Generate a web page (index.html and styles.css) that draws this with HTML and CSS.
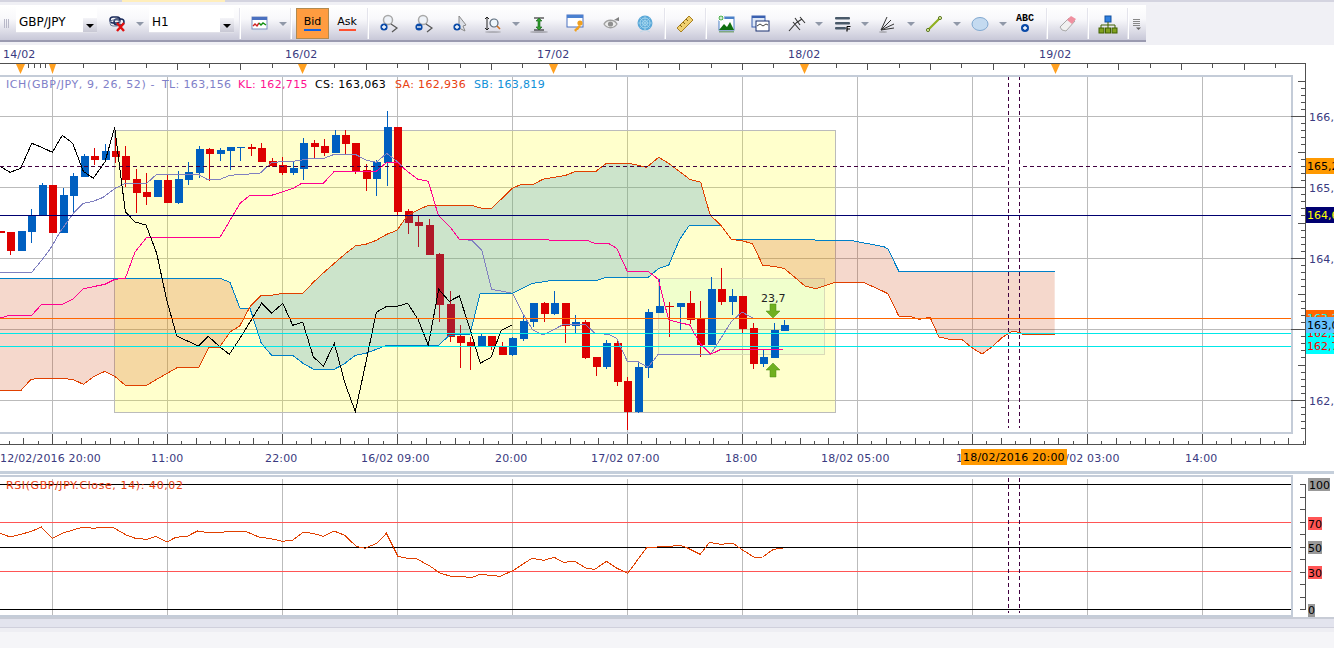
FILE: index.html
```html
<!DOCTYPE html>
<html lang="en">
<head>
    <meta charset="UTF-8">
    <title>GBP/JPY H1</title>
    <link rel="stylesheet" href="styles.css">
</head>
<body>
    <div class="tabstrip"><div class="tab-active"></div></div>
    <div class="toolbar-row">
        <div class="toolbar">
            <div class="grip"></div>
            <div class="combo combo-symbol">GBP/JPY<span class="combo-btn"></span></div>
            <svg class="icon" viewBox="0 0 20 20"><rect x="2" y="3" width="10" height="6" rx="3" fill="none" stroke="#1a2a5a" stroke-width="1.5"/><rect x="6" y="5" width="10" height="6" rx="3" fill="none" stroke="#1a2a5a" stroke-width="1.5"/><rect x="2" y="6" width="10" height="6" rx="3" fill="none" stroke="#6a7a9a"/><path d="M9 9l7 8M16 9l-7 8" stroke="#e01010" stroke-width="2.4"/></svg>
            <span class="drop"></span>
            <div class="combo combo-period">H1<span class="combo-btn"></span></div>
            <div class="sep"></div>
            <svg class="icon" viewBox="0 0 20 20"><rect x="2" y="3" width="15" height="12" fill="#fff" stroke="#7a90c0"/><rect x="2" y="3" width="15" height="3" fill="#4a70c0"/><path d="M3 12l2-2 2 2 2-3" fill="none" stroke="#d02020" stroke-width="1.4"/><path d="M9 9l2 2 2-2 3 2" fill="none" stroke="#109010" stroke-width="1.4"/><rect x="3" y="16" width="13" height="2" fill="#d8dce8"/></svg>
            <span class="drop"></span>
            <div class="sep"></div>
            <div class="price-btn price-bid"><span class="price-text">Bid</span><span class="price-bar bar-bid"></span></div>
            <div class="price-btn"><span class="price-text">Ask</span><span class="price-bar bar-ask"></span></div>
            <div class="sep"></div>
            <svg class="icon" viewBox="0 0 20 20"><circle cx="9" cy="6" r="4.5" fill="#eef2f8" stroke="#a8a8a8" stroke-width="1.5"/><path d="M12 10l6 4-5 4" fill="none" stroke="#555" stroke-width="1.2"/><circle cx="5" cy="13" r="3.6" fill="#0a4aa8"/><path d="M3 13h4M5 11v4" stroke="#fff" stroke-width="1.3"/></svg>
            <svg class="icon" viewBox="0 0 20 20"><circle cx="9" cy="6" r="4.5" fill="#eef2f8" stroke="#a8a8a8" stroke-width="1.5"/><path d="M12 10l6 4-5 4" fill="none" stroke="#555" stroke-width="1.2"/><circle cx="5" cy="13" r="3.6" fill="#0a4aa8"/><path d="M3 13h4" stroke="#fff" stroke-width="1.3"/></svg>
            <svg class="icon" viewBox="0 0 20 20"><path d="M9 2l7 9-3 1 2 5-6-3z" fill="#dcdfe6" stroke="#8a8a8a"/><circle cx="7" cy="13" r="3.6" fill="#0a4aa8"/><path d="M5 13h4M7 11v4" stroke="#fff" stroke-width="1.3"/></svg>
            <svg class="icon" viewBox="0 0 20 20"><path d="M4 3v13M2 5l2-2 2 2M2 14l2 2 2-2" fill="none" stroke="#222"/><circle cx="11" cy="9" r="4" fill="#eef6fb" stroke="#5a6a7a" stroke-width="1.2"/><path d="M14 12l3 3" stroke="#d07020" stroke-width="1.6"/><ellipse cx="10" cy="18" rx="8" ry="1" fill="#b0b0b8"/></svg>
            <span class="drop"></span>
            <svg class="icon" viewBox="0 0 20 20"><path d="M5 4h10M5 16h10" stroke="#111" stroke-width="1.2"/><path d="M10 4l3 3h-2v6h2l-3 3-3-3h2V7H7z" fill="#30a030" stroke="#106010" stroke-width=".6"/><ellipse cx="10" cy="18" rx="9" ry="1" fill="#a8a8b0"/></svg>
            <svg class="icon" viewBox="0 0 20 20"><rect x="1" y="1" width="16" height="12" fill="#fff" stroke="#4a70c0"/><rect x="1" y="1" width="16" height="3" fill="#4a80d0"/><circle cx="14" cy="9" r="2.6" fill="#f0a020"/><path d="M13 11l-5 5 2 2 1-2 1 0 3-4" fill="#f0a020"/></svg>
            <svg class="icon" viewBox="0 0 20 20"><path d="M2 10c3-5 10-5 13 0-3 5-10 5-13 0z" fill="#eee" stroke="#a0a0a0" stroke-width="1.3"/><circle cx="8.5" cy="10" r="2.6" fill="#909090"/><path d="M12 6l5-3v4z" fill="#808080"/></svg>
            <svg class="icon" viewBox="0 0 20 20"><circle cx="10" cy="9" r="7.5" fill="#5aa8d8"/><circle cx="10" cy="9" r="5" fill="none" stroke="#a8d8f0"/><circle cx="10" cy="9" r="2.5" fill="none" stroke="#a8d8f0"/><path d="M3 9h14M10 2v14M5 4l10 10M15 4L5 14" stroke="#a8d8f0" stroke-width=".6"/><path d="M5 18l5-2 5 2" fill="none" stroke="#c0d8e8"/></svg>
            <div class="sep"></div>
            <svg class="icon" viewBox="0 0 20 20"><path d="M2 14L14 2l4 4L6 18z" fill="#f0d070" stroke="#a88020"/><path d="M5 11l2 2M8 8l2 2M11 5l2 2" stroke="#806010"/></svg>
            <div class="sep"></div>
            <svg class="icon" viewBox="0 0 20 20"><rect x="3" y="3" width="15" height="13" fill="#fff" stroke="#4a80c8"/><rect x="3" y="3" width="15" height="2" fill="#4a80c8"/><path d="M3 16l5-6 3 3 3-5 4 8z" fill="#107010"/><circle cx="5" cy="4" r="3" fill="#50b050" stroke="#fff"/><path d="M3.5 4h3M5 2.500v3" stroke="#fff"/><rect x="3" y="17" width="15" height="1.5" fill="#80a880"/></svg>
            <svg class="icon" viewBox="0 0 20 20"><rect x="1" y="2" width="13" height="11" fill="#dfe8f6" stroke="#3a60b0"/><rect x="1" y="2" width="13" height="2" fill="#3a60b0"/><rect x="5" y="7" width="13" height="10" fill="#fff" stroke="#1a3070"/><path d="M6 12l3-2 3 2 3-2 2 1" fill="none" stroke="#444"/></svg>
            <svg class="icon" viewBox="0 0 20 20"><path d="M2 17l7-8M6 8l7 8M8 4l5 7M13 3l5 6M9 9l6-4" fill="none" stroke="#333" stroke-width="1.1"/></svg>
            <span class="drop"></span>
            <svg class="icon" viewBox="0 0 20 20"><rect x="2" y="3" width="15" height="2.500" rx="1" fill="#4a5a6a"/><rect x="2" y="8" width="15" height="2.500" rx="1" fill="#4a5a6a"/><rect x="2" y="13" width="11" height="2.500" rx="1" fill="#4a5a6a"/><path d="M14 12.500h3.500M14 12.500v5M14 15h3" stroke="#000" stroke-width="1.2" fill="none"/></svg>
            <span class="drop"></span>
            <svg class="icon" viewBox="0 0 20 20"><path d="M3 16L9 3M3 16L13 6M3 16L16 10M3 16l13-2" fill="none" stroke="#333"/><ellipse cx="5" cy="18" rx="4" ry="1" fill="#b0b0b8"/></svg>
            <span class="drop"></span>
            <svg class="icon" viewBox="0 0 20 20"><path d="M4 16L16 4" stroke="#90b020" stroke-width="2.2"/><circle cx="4" cy="16" r="1.6" fill="#d8e8a0" stroke="#406000" stroke-width=".8"/><circle cx="16" cy="4" r="1.6" fill="#d8e8a0" stroke="#406000" stroke-width=".8"/></svg>
            <span class="drop"></span>
            <svg class="icon" viewBox="0 0 20 20"><ellipse cx="10" cy="10" rx="8" ry="6.500" fill="#c4daf0" stroke="#80a8d0"/></svg>
            <span class="drop"></span>
            <div class="abc"><span class="abc-text">ABC</span><svg class="abc-plus" viewBox="0 0 10 10"><circle cx="5" cy="5" r="4" fill="#0a4aa8"/><path d="M3 5h4M5 3v4" stroke="#fff" stroke-width="1.300"/></svg></div>
            <div class="sep"></div>
            <svg class="icon" viewBox="0 0 20 20"><path d="M2 13l9-9 6 3-9 10-4-1z" fill="#f0f0f0" stroke="#a8a8a8"/><path d="M9 6l4-4 5 3-4 5z" fill="#f090a0"/></svg>
            <div class="sep"></div>
            <svg class="icon" viewBox="0 0 20 20"><rect x="7" y="2" width="6" height="6" fill="#3080e0" stroke="#1050a0"/><path d="M10 8v3M3 14v-3h14v3M10 11v3" fill="none" stroke="#406000"/><rect x="1" y="14" width="5" height="5" fill="#80a020" stroke="#406000"/><rect x="7.500" y="14" width="5" height="5" fill="#80a020" stroke="#406000"/><rect x="14" y="14" width="5" height="5" fill="#80a020" stroke="#406000"/></svg>
            <div class="sep"></div>
            <svg class="icon icon-more" viewBox="0 0 10 12"><path d="M1 1.500h7M1 3.500h7M1 5.500h7M1 7.500h7" stroke="#888"/><path d="M4 9.500h5l-2.500 2.500z" fill="#666"/></svg>
        </div>
    </div>

    <svg class="chart chart-main" viewBox="0 45 1334 426">
        <g id="mainGrid"></g>
        <rect class="zone" x="114.500" y="130.500" width="720.500" height="281.500"/>
        <rect class="zone-inner" x="658.500" y="278.500" width="166" height="76"/>
        <g id="candles"></g>
        <g id="clouds"></g>
        <g id="ichimoku"></g>
        <path class="hline dash" d="M0 166.500H1005M1023 166.500H1291"/>
        <path class="hline dash" d="M1008.500 76V428M1019.500 76V428"/>
        <path class="hline navy" d="M0 215.500H1291"/>
        <path class="hline orange" d="M0 318.500H1291"/>
        <path class="hline cyan" d="M0 333.500H1291M0 346.500H1291"/>
        <g id="mainAxes"></g>

        <text class="axis-label" x="3" y="58">14/02</text>
        <text class="axis-label" x="285" y="58">16/02</text>
        <text class="axis-label" x="537" y="58">17/02</text>
        <text class="axis-label" x="788" y="58">18/02</text>
        <text class="axis-label" x="1039" y="58">19/02</text>

        <text class="legend legend-wide c-ich" x="6" y="88">ICH(GBP/JPY, 9, 26, 52) -</text>
        <text class="legend c-ich" x="162" y="88">TL: 163,156</text>
        <text class="legend c-kl" x="238" y="88">KL: 162,715</text>
        <text class="legend c-cs" x="315" y="88">CS: 163,063</text>
        <text class="legend c-sa" x="395" y="88">SA: 162,936</text>
        <text class="legend c-sb" x="474" y="88">SB: 163,819</text>

        <text class="value" x="761" y="302">23,7</text>
        <path class="arrow-green" d="M770 304h6v7h4l-7 7-7-7h4z"/>
        <path class="arrow-green" d="M773 363l7 7h-4v7h-6v-7h-4z"/>

        <text class="axis-label" x="1309" y="121">166,0</text>
        <text class="axis-label" x="1309" y="192">165,0</text>
        <text class="axis-label" x="1309" y="263">164,0</text>
        <text class="axis-label" x="1309" y="405">162,0</text>

        <rect class="tag-orange" x="1306" y="158" width="28" height="16"/>
        <text class="tag-text t-black" x="1307" y="170">165,2</text>
        <rect class="tag-navy" x="1306" y="207" width="28" height="16"/>
        <text class="tag-text t-yellow" x="1307" y="219">164,6</text>
        <rect class="tag-deep" x="1306" y="310" width="28" height="9"/>
        <text class="tag-text t-cyan" x="1307" y="322">163,2</text>
        <rect class="tag-cyan" x="1306" y="333" width="28" height="21"/>
        <text class="tag-text t-red" x="1307" y="337">162,9</text>
        <rect class="tag-sky" x="1306" y="317" width="28" height="16"/>
        <text class="tag-text t-black" x="1307" y="329">163,0</text>
        <text class="tag-text t-red" x="1307" y="350">162,7</text>

        <text class="axis-label" x="0" y="462">12/02/2016 20:00</text>
        <text class="axis-label" x="151" y="462">11:00</text>
        <text class="axis-label" x="265" y="462">22:00</text>
        <text class="axis-label" x="361" y="462">16/02 09:00</text>
        <text class="axis-label" x="495" y="462">20:00</text>
        <text class="axis-label" x="591" y="462">17/02 07:00</text>
        <text class="axis-label" x="725" y="462">18:00</text>
        <text class="axis-label" x="821" y="462">18/02 05:00</text>
        <text class="axis-label" x="956" y="462">16:00</text>
        <text class="axis-label" x="1051" y="462">19/02 03:00</text>
        <text class="axis-label" x="1185" y="462">14:00</text>
        <rect class="tag-orange" x="961" y="449" width="106" height="16"/>
        <text class="tag-text tag-wide t-black" x="963" y="461">18/02/2016 20:00</text>
    </svg>

    <div class="splitter"></div>

    <svg class="chart chart-rsi" viewBox="0 475 1334 142">
        <g id="rsiGrid"></g>
        <path class="hline rsi-level" d="M0 522.500H1291M0 571.500H1291"/>
        <path class="hline rsi-mid" d="M0 484.500H1291M0 547.500H1291M0 609.500H1291"/>
        <path class="hline dash" d="M1008.500 478V613M1019.500 478V613"/>
        <polyline id="rsiLine" class="line c-rsi"/>
        <g id="rsiAxes"></g>
        <text class="legend legend-wide c-rsi-text" x="6" y="489">RSI(GBP/JPY.Close, 14): 40,02</text>
        <rect class="tag-gray" x="1308" y="478" width="22" height="13"/>
        <text class="tag-text t-black" x="1309" y="489">100</text>
        <rect class="tag-red" x="1308" y="517" width="14" height="13"/>
        <text class="tag-text t-black" x="1308" y="528">70</text>
        <rect class="tag-gray" x="1308" y="541" width="14" height="13"/>
        <text class="tag-text t-black" x="1308" y="552">50</text>
        <rect class="tag-red" x="1308" y="566" width="14" height="13"/>
        <text class="tag-text t-black" x="1308" y="577">30</text>
        <rect class="tag-gray" x="1308" y="604" width="7" height="13"/>
        <text class="tag-text t-black" x="1308" y="614">0</text>
    </svg>

    <div class="footer">
        <div class="footer-bar"></div>
        <div class="footer-strip"></div>
    </div>

    <script src="chart.js"></script>
</body>
</html>
```

FILE: styles.css
```css
body {
    margin: 0;
    height: 648px;
    overflow: hidden;
    background-color: #f5f5f8;
    font-family: "DejaVu Sans", sans-serif;
    font-size: 11px;
}

.tabstrip {
    height: 5px;
    background-color: #f0f0f5;
    box-sizing: border-box;
    border-top: 2px solid #d4d4e0;
}

.tab-active {
    width: 103px;
    height: 2px;
    margin: -2px 0 0 122px;
    background-color: #ffeebb;
}

.toolbar-row {
    height: 40px;
    background-color: #f0f0f5;
}

.toolbar {
    display: grid;
    grid-template-columns: 12px 89px 34px 10px 93px 4px 36px 10px 6px 37px 32px 10px 32px 37px 36px 30px 16px 30px 44px 28px 38px 2px 38px 4px 36px 34px 38px 6px 42px 2px 44px 2px 44px 2px 44px 2px 42px 2px 39px 2px 38px 2px 16px;
    justify-items: center;
    align-items: center;
    width: 1146px;
    height: 37px;
    padding-top: 2px;
    box-sizing: border-box;
    background: linear-gradient(#ffffff, #f8f8fb 40%, #c8c8d8);
    border-bottom: 2px solid #9a9ab0;
}

.grip {
    width: 5px;
    height: 9px;
    background: repeating-linear-gradient(90deg, #b8b8c8 0, #b8b8c8 1px, transparent 1px, transparent 2px);
}

.icon {
    width: 20px;
    height: 20px;
}

.icon-more {
    width: 10px;
    height: 12px;
}

.drop {
    width: 0;
    height: 0;
    border-left: 4px solid transparent;
    border-right: 4px solid transparent;
    border-top: 4px solid #9098a8;
}

.sep {
    width: 1px;
    height: 31px;
    background-color: #e4e4ec;
    border-right: 1px solid #ffffff;
}

.combo {
    position: relative;
    align-self: start;
    height: 26px;
    line-height: 30px;
    padding-left: 3px;
    box-sizing: border-box;
    background-color: #fff;
    border-bottom: 1px solid #e0e0e8;
    font-size: 12px;
    color: #000;
}

.combo-symbol {
    width: 81px;
}

.combo-period {
    width: 85px;
}

.combo-btn {
    position: absolute;
    top: 11px;
    right: 0;
    width: 14px;
    height: 14px;
    background: linear-gradient(#f4f4f8, #c8c8d4);
}

.combo-btn::after {
    content: "";
    position: absolute;
    left: 3px;
    top: 6px;
    border-left: 4px solid transparent;
    border-right: 4px solid transparent;
    border-top: 4px solid #000;
}

.price-btn {
    display: flex;
    flex-direction: column;
    align-items: center;
    justify-content: center;
    width: 33px;
    height: 31px;
    box-sizing: border-box;
    gap: 1px;
}

.price-bid {
    background-color: #ff9c40;
    border: 1px solid #b08a50;
}

.price-text {
    font-size: 11px;
    line-height: 12px;
    color: #000;
}

.price-bar {
    width: 17px;
    height: 2px;
}

.bar-bid {
    background-color: #1060e0;
}

.bar-ask {
    background-color: #ff5030;
}

.abc {
    display: flex;
    flex-direction: column;
    align-items: center;
}

.abc-text {
    font-family: "Liberation Mono", monospace;
    font-size: 10px;
    font-weight: bold;
    line-height: 9px;
    color: #000;
}

.abc-plus {
    width: 10px;
    height: 10px;
}

.chart {
    display: block;
    width: 1334px;
    background-color: #fff;
}

.chart-main {
    height: 426px;
}

.chart-rsi {
    height: 142px;
}

.splitter {
    height: 4px;
    background: linear-gradient(#c5cfdb 75%, #fff 75%);
}

.footer {
    height: 31px;
    border-top: 2px solid #c8ccd6;
    box-sizing: border-box;
}

.footer-bar {
    height: 8px;
    background-color: #e3e4ee;
    border-bottom: 1px solid #d0d0dc;
}

.footer-strip {
    height: 4px;
    background-color: #eeeef3;
}

.grid-line {
    stroke: #bbbbbb;
    stroke-width: 1;
    shape-rendering: crispEdges;
}

.frame {
    stroke: #c4ccd8;
    stroke-width: 2;
    fill: none;
    shape-rendering: crispEdges;
}

.axis-line {
    stroke: #505050;
    stroke-width: 1;
    shape-rendering: crispEdges;
}

.zone {
    fill: rgba(255, 255, 0, 0.2);
    stroke: #bbbbbb;
    shape-rendering: crispEdges;
}

.zone-inner {
    fill: rgba(128, 255, 204, 0.12);
    stroke: #dadab8;
    shape-rendering: crispEdges;
}

.wick,
.body {
    shape-rendering: crispEdges;
}

.up {
    fill: #005fc0;
    stroke: #005fc0;
}

.down {
    fill: #dd0000;
    stroke: #dd0000;
}

.body {
    stroke: none;
}

.cloud-red {
    fill: rgba(205, 60, 0, 0.2);
}

.cloud-green {
    fill: rgba(0, 120, 200, 0.2);
}

.line {
    fill: none;
    stroke-width: 1;
    shape-rendering: crispEdges;
}

.c-sa-line { stroke: #e04000; }
.c-sb-line { stroke: #0080c8; }
.c-tl-line { stroke: #8080c0; }
.c-kl-line { stroke: #ff0090; }
.c-cs-line { stroke: #000000; }
.c-rsi { stroke: #e04000; }

.hline {
    fill: none;
    stroke-width: 1;
    shape-rendering: crispEdges;
}

.dash {
    stroke: #400040;
    stroke-dasharray: 4 3;
}

.navy { stroke: #000070; }
.orange { stroke: #ff6600; }
.cyan { stroke: #00e8e8; }
.rsi-level { stroke: #ff5555; }
.rsi-mid { stroke: #000000; }

.marker {
    fill: #ffa020;
}

.axis-label,
.legend,
.value,
.tag-text {
    font-family: "DejaVu Sans", sans-serif;
    font-size: 11px;
}

.axis-label { fill: #3a3a80; letter-spacing: 0.15px; }
.legend { letter-spacing: 0.35px; }
.legend-wide { letter-spacing: 0.6px; }
.tag-wide { letter-spacing: 0.2px; }
.c-ich { fill: #8080c8; }
.c-kl { fill: #ff1090; }
.c-cs { fill: #000000; }
.c-sa { fill: #e84010; }
.c-sb { fill: #1090d8; }
.c-rsi-text { fill: #e84010; }
.value { fill: #222222; }

.arrow-green {
    fill: #70b020;
    stroke: #4a8a10;
    stroke-width: 0.5;
}

.tag-orange { fill: #ff9900; }
.tag-navy { fill: #000070; }
.tag-deep { fill: #ff6600; }
.tag-sky { fill: #66c0ff; }
.tag-cyan { fill: #00ffff; }
.tag-gray { fill: #999999; }
.tag-red { fill: #ff5555; }

.t-black { fill: #000000; }
.t-yellow { fill: #ffff00; }
.t-cyan { fill: #00ffff; }
.t-red { fill: #ff0000; }
```

FILE: chart.js
```js
// all chart data below was read off at 3x, so pts() brings it back to page pixels
var NS = "http://www.w3.org/2000/svg";

function add(parent, name, attrs) {
    var node = document.createElementNS(NS, name);
    for (var key in attrs) {
        node.setAttribute(key, attrs[key]);
    }
    parent.appendChild(node);
    return node;
}

function pts(x0, flat, scale) {
    var out = [];
    for (var i = 0; i < flat.length; i += 2) {
        out.push([x0 + flat[i] / (scale || 3), 100 + flat[i + 1] / 3]);
    }
    return out;
}

function str(list) {
    return list.map(function (p) { return p[0].toFixed(1) + "," + p[1].toFixed(1); }).join(" ");
}

function vline(parent, x, y1, y2, cls) {
    add(parent, "line", { x1: x, x2: x, y1: y1, y2: y2, class: cls });
}

function hline(parent, y, x1, x2, cls) {
    add(parent, "line", { x1: x1, x2: x2, y1: y, y2: y, class: cls });
}

var gridX = [52, 167, 282, 397, 512, 627, 742, 857, 972, 1087, 1202];

// main grid
var mainGrid = document.getElementById("mainGrid");
gridX.forEach(function (x) {
    vline(mainGrid, x + 0.5, 77, 432, "grid-line");
});
[116, 187, 258, 329, 400].forEach(function (y) {
    hline(mainGrid, y + 0.5, 0, 1291, "grid-line");
});

// candles: color, wick top, body top, body bottom, wick bottom
var candleData = [
    ["d",393,393,399,399], ["d",396,396,452,465], ["u",393,393,453,453], ["u",327,346,396,429],
    ["u",250,255,346,346], ["d",255,255,399,399], ["u",264,285,399,399], ["u",220,228,288,336],
    ["u",162,168,231,231], ["d",144,168,180,195], ["u",132,153,180,180], ["d",90,153,171,190],
    ["d",138,168,240,260], ["d",207,237,279,339], ["d",219,276,291,315], ["u",240,240,291,291],
    ["d",225,240,309,309], ["u",213,237,309,312], ["u",186,216,240,255], ["u",138,147,219,234],
    ["d",144,147,162,243], ["u",144,150,162,183], ["u",141,141,153,210], ["u",140,141,144,183],
    ["d",132,141,147,168], ["d",129,144,186,186], ["d",174,183,198,201], ["d",171,195,219,225],
    ["u",186,204,219,225], ["u",114,129,207,240], ["d",120,129,141,174], ["d",117,138,159,168],
    ["u",90,105,159,159], ["d",90,105,132,162], ["d",129,129,216,222], ["d",192,210,237,273],
    ["u",180,186,237,288], ["u",33,81,189,258], ["d",81,81,336,346], ["d",327,333,369,402],
    ["d",348,366,378,441], ["d",357,375,465,465], ["d",460,462,615,666], ["d",573,612,711,726],
    ["d",675,708,729,804], ["d",711,726,738,810], ["u",702,708,738,740], ["d",708,708,738,750],
    ["d",726,741,765,765], ["u",711,714,765,768], ["u",642,663,717,723], ["u",609,609,666,681],
    ["d",606,609,642,666], ["u",573,609,642,645], ["d",609,609,678,729], ["u",645,666,678,699],
    ["d",660,666,774,777], ["d",771,771,801,828], ["u",720,729,801,807], ["d",720,729,846,858],
    ["d",831,843,936,990], ["u",786,801,936,939], ["u",627,636,804,834], ["u",537,618,639,639],
    ["d",606,618,621,711], ["u",609,609,621,690], ["d",573,609,660,672], ["d",603,657,735,771],
    ["u",531,567,735,735], ["d",504,567,606,615], ["u",567,588,606,645], ["d",588,588,687,699],
    ["d",669,684,792,807], ["u",750,771,792,801], ["u",669,690,774,774], ["u",660,675,693,693]
];

var candles = document.getElementById("candles");
candleData.forEach(function (c, i) {
    var cx = Math.round(52.3 + (i - 5) * 10.4545);
    var cls = c[0] == "u" ? "up" : "down";
    var y = function (v) { return 100 + v / 3; };
    vline(candles, cx + 0.5, y(c[1]), y(c[4]), "wick " + cls);
    add(candles, "rect", { x: cx - 3, y: y(c[2]), width: 7.5, height: Math.max(y(c[3]) - y(c[2]), 1), class: "body " + cls });
});

// ichimoku, split where the two spans cross
var sa1 = pts(0, [0,872,62,872,93,838,124,835,172,835,218,838,250,853,282,829,315,814,344,829,376,856,440,856,470,838,533,802,596,802,627,741,659,741,690,696,719,678,750,620]);
var sb1 = pts(0, [0,535,660,535,690,547,720,625,750,625]);

var sa2 = pts(0, [750,620,784,586,815,586,847,580,909,580,940,547,972,517,1003,490,1035,462,1066,438,1097,433,1129,421,1160,403,1191,391,1223,345,1254,330,1285,316]).concat(
    pts(400, [215,316,245,325,275,325,338,264,365,253,401,253,428,238,497,226,527,214,588,214,619,190,688,190,740,202,776,172,806,190,838,214,869,238,902,247,931,346,963,376]));
var sb2 = pts(0, [750,625,784,730,815,766,878,766,909,790,941,808,1003,808,1035,790,1066,766,1097,760,1129,748,1160,736,1316,736,1348,706]).concat(
    pts(400, [210,703,240,582,275,580,338,580,398,550,460,541,590,541,619,532,745,532,776,505,806,496,838,420,868,376,963,376]));

var sa3 = pts(400, [963,376,994,418,1030,423,1058,432,1088,496,1120,499,1152,505,1215,558,1247,566,1305,547,1390,547]).concat(
    pts(884, [0,575,12,581,44,648,80,650,105,658,138,652,165,711,197,718,233,718,262,742,294,762,325,740,355,712,385,694,406,697,417,703,512,703]));
var sb3 = pts(400, [963,376,994,418,1350,421]).concat(
    pts(884, [0,440,12,447,44,513,512,513]));

var clouds = document.getElementById("clouds");
[[sa1, sb1, "cloud-red"], [sa2, sb2, "cloud-green"], [sa3, sb3, "cloud-red"]].forEach(function (part) {
    add(clouds, "polygon", { points: str(part[0].concat(part[1].slice().reverse())), class: part[2] });
});

var tenkan = pts(0, [0,517,95,517,125,481,155,440,180,396,220,340,250,310,280,304,310,292,345,265,376,250,440,250,470,223,595,223,625,240,660,238,690,226,780,220,815,187,878,184,940,175,972,175,1003,163,1066,163,1097,180,1129,187,1160,160,1191,184,1223,215,1254,238,1285,244,1315,346]).concat(
    pts(400, [150,380,178,418,215,421,245,450,275,568,338,580,368,640,398,690,430,705,493,672,555,672,585,700,625,703,650,715,682,784,712,784,744,802,775,763,932,763,994,665,1026,636,1058,654]));
var kijun = pts(0, [0,654,30,646,95,646,125,613,187,613,218,598,250,566,315,553,345,538,376,535,405,456,440,412,660,412,720,310,750,286,815,286,880,265,905,250,970,250,1003,214,1129,214,1160,187,1191,187,1223,215,1254,238,1285,244,1315,346,1350,380]).concat(
    pts(400, [178,418,560,421,585,430,625,430,650,445,682,514,744,514,775,538,806,660,869,675,900,730,932,763,963,748,1148,748]));
var chikou = pts(0, [0,199,30,217,62,205,95,130,125,142,157,157,187,106,218,130,250,214,280,235,315,185,344,82,376,335,405,366,438,375,470,460,500,600,530,708,595,738,625,709,660,741,688,763,720,715,785,609,815,640,848,610,878,676,908,666,940,770,970,799,1003,730,1035,850,1066,935,1097,790,1129,637,1160,619,1191,619,1223,610,1254,658,1285,736,1316,568,1348,604]).concat(
    pts(400, [178,588,210,687,241,790,273,772,304,691,335,676]));

var ichimoku = document.getElementById("ichimoku");
[[tenkan, "c-tl-line"], [sb1, "c-sb-line"], [sb2, "c-sb-line"], [sb3, "c-sb-line"],
 [sa1, "c-sa-line"], [sa2, "c-sa-line"], [sa3, "c-sa-line"], [kijun, "c-kl-line"], [chikou, "c-cs-line"]].forEach(function (l) {
    add(ichimoku, "polyline", { points: str(l[0]), class: "line " + l[1] });
});

// axes of the main pane
var axes = document.getElementById("mainAxes");
add(axes, "path", { d: "M0 76H1292V433H0", class: "frame" });
hline(axes, 63.5, 0, 1306, "axis-line");
hline(axes, 444.5, 0, 1306, "axis-line");
vline(axes, 1305.5, 63, 445, "axis-line");

for (var k = -1; k < 40; k++) {
    var tx = Math.round(52 + k * 31.36) + 0.5;
    if (tx < 1305) {
        vline(axes, tx, 64, k % 2 ? 68 : 70, "axis-line");
    }
}
[28, 34, 40, 45].forEach(function (x) {
    vline(axes, x + 0.5, 64, 68, "axis-line");
});
[20.5, 52.5, 302.5, 553.5, 804.5, 1055.5].forEach(function (x) {
    var w = x == 52.5 ? 3.5 : 4.5;
    add(axes, "path", { d: "M" + (x - w) + " 64h" + (w * 2) + "l-" + w + " 10z", class: "marker" });
});

for (var t = -3; t < 88; t++) {
    var bx = Math.round(52 + t * 14.375) + 0.5;
    if (bx > 0 && bx < 1305) {
        var len = t % 8 == 0 ? 10 : (t % 2 == 0 ? 6 : 3);
        vline(axes, bx, 444 - len, 444, "axis-line");
    }
}

// price ticks: long on the round values, medium halfway
for (var n = 0; n < 51; n++) {
    var ay = Math.round(116 + (n - 5) * 7.1) + 0.5;
    var mark = (n % 10 == 5) ? 1291 : (n % 10 == 0 ? 1298 : 1301);
    if (ay > 78 && ay < 432) {
        hline(axes, ay, mark, 1305, "axis-line");
    }
}

// rsi pane
var rsiGrid = document.getElementById("rsiGrid");
gridX.forEach(function (x) {
    vline(rsiGrid, x + 0.5, 479, 616, "grid-line");
});

var rsi = pts(0, [0,310,24,321,72,305,97,291,123,325,146,310,195,291,220,295,245,291,268,294,298,316,318,325,345,328,366,319,393,336,413,322,440,319,464,303,483,307,525,307,530,303,575,303,610,322,632,325,664,334,688,330,712,307,735,310,760,319,785,303,810,316,837,349,858,355,885,340,908,310,935,379,955,384,980,387,1010,408,1035,430,1060,439,1110,442,1128,433,1175,439,1205,422,1250,385,1278,391,1302,382,1325,397,1350,394,1378,415,1398,418,1425,394,1450,415,1475,430,1520,352,1568,350], 2.35).concat(
    pts(667, [30,346,45,352,78,373,100,337,125,343,155,340,175,358,205,382,225,381,250,358,272,355], 2.35));
rsi.forEach(function (p) { p[1] += 330; });
document.getElementById("rsiLine").setAttribute("points", str(rsi));

var rsiAxes = document.getElementById("rsiAxes");
add(rsiAxes, "path", { d: "M0 476H1292V616H0", class: "frame" });
vline(rsiAxes, 1305.5, 484, 610, "axis-line");
for (var r = 0; r <= 10; r++) {
    hline(rsiAxes, Math.round(484 + r * 12.5) + 0.5, 1300, 1305, "axis-line");
}
```
